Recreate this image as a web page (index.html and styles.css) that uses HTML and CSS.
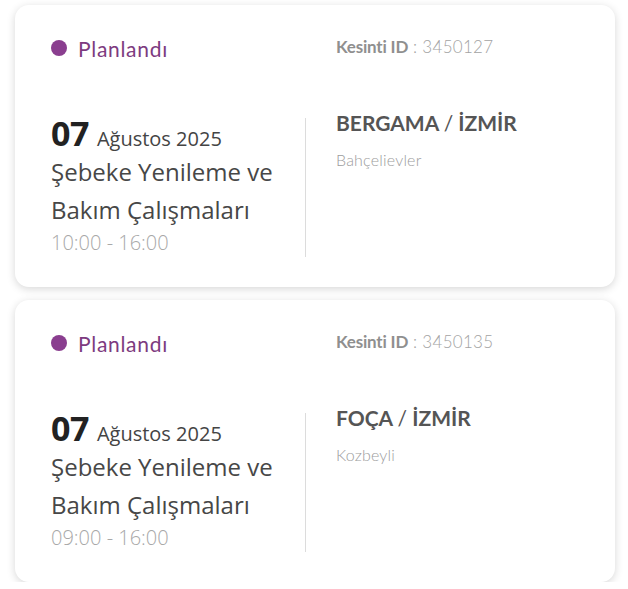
FILE: index.html
```html
<!DOCTYPE html>
<html lang="tr">
<head>
<meta charset="utf-8">
<link rel="stylesheet" href="styles.css">
</head>
<body>
<div class="list">
  <div class="card">
    <div class="head">
      <div class="status"><span class="dot"></span><span>Planlandı</span></div>
      <div class="kid"><b>Kesinti ID</b> : 3450127</div>
    </div>
    <div class="body">
      <div class="left">
        <div class="date"><span class="day">07</span><span class="month">Ağustos 2025</span></div>
        <div class="title">Şebeke Yenileme ve Bakım Çalışmaları</div>
        <div class="time">10:00 - 16:00</div>
      </div>
      <div class="right">
        <div class="city">BERGAMA <span class="sl">/</span> İZMİR</div>
        <div class="district">Bahçelievler</div>
      </div>
    </div>
  </div>
  <div class="card">
    <div class="head">
      <div class="status"><span class="dot"></span><span>Planlandı</span></div>
      <div class="kid"><b>Kesinti ID</b> : 3450135</div>
    </div>
    <div class="body">
      <div class="left">
        <div class="date"><span class="day">07</span><span class="month">Ağustos 2025</span></div>
        <div class="title">Şebeke Yenileme ve Bakım Çalışmaları</div>
        <div class="time">09:00 - 16:00</div>
      </div>
      <div class="right">
        <div class="city">FOÇA <span class="sl">/</span> İZMİR</div>
        <div class="district">Kozbeyli</div>
      </div>
    </div>
  </div>
</div>
</body>
</html>
```
FILE: styles.css
```css
html, body {
  margin: 0;
  padding: 0;
  background: #fff;
}
.list {
  padding: 5px 13px 0 15px;
  display: flex;
  flex-direction: column;
  gap: 13px;
}
.card {
  background: #fff;
  border-radius: 14px;
  box-shadow: 0 2px 8px rgba(0,0,0,0.16);
  padding: 31px 36px 30px 36px;
  height: 282px;
  box-sizing: border-box;
}
.head {
  display: flex;
  align-items: center;
  height: 24px;
}
.status {
  width: 285px;
  display: flex;
  align-items: center;
  gap: 11px;
  font-family: "Lato", sans-serif;
  font-size: 21px;
  letter-spacing: 0.7px;
  color: #7d3b80;
}
.dot {
  width: 16px;
  height: 16px;
  border-radius: 50%;
  background: #8a3e8f;
  flex: none;
}
.kid {
  font-family: "Lato", sans-serif;
  font-size: 17px;
  color: #a3a3a3;
  margin-top: -4px;
  font-weight: 300;
  letter-spacing: 0.3px;
}
.kid b {
  color: #8f8f8f;
  font-weight: 700;
  letter-spacing: -0.2px;
}
.body {
  display: flex;
  margin-top: 58px;
}
.left {
  width: 254px;
  border-right: 1px solid #dcdcdc;
  font-family: "Open Sans", sans-serif;
}
.date {
  height: 35px;
  line-height: 39px;
  margin-top: -4px;
  white-space: nowrap;
}
.day {
  font-size: 34px;
  font-weight: 700;
  color: #222;
  letter-spacing: -0.5px;
  margin-right: 8px;
}
.month {
  font-size: 20px;
  color: #444;
}
.title {
  font-size: 24px;
  line-height: 38px;
  color: #474747;
  width: 240px;
  margin-top: 4px;
}
.time {
  font-size: 20px;
  line-height: 28px;
  color: #a8a8a8;
  font-weight: 300;
}
.right {
  padding-left: 30px;
  font-family: "Lato", sans-serif;
}
.city {
  font-size: 21px;
  font-weight: 700;
  color: #555;
  line-height: 24px;
  margin-top: -7px;
}
.sl {
  font-weight: 400;
}
.district {
  font-size: 16px;
  color: #9c9c9c;
  margin-top: 15px;
  font-weight: 300;
  letter-spacing: 0.2px;
}
```
